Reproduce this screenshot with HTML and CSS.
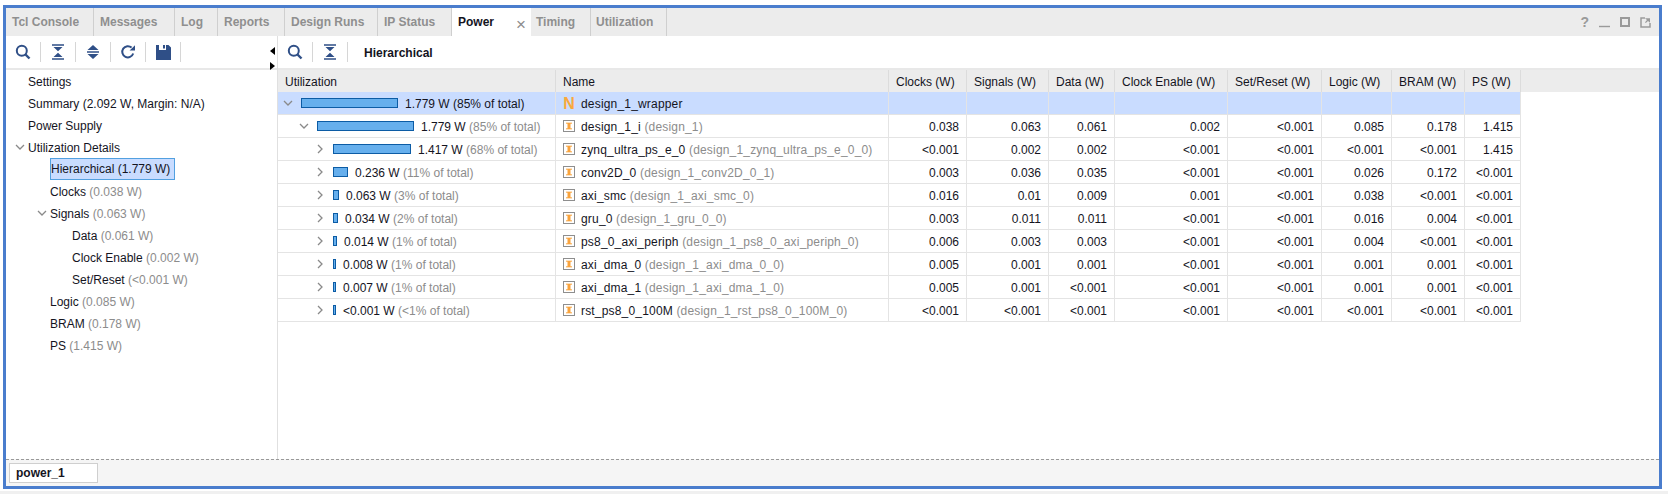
FILE: index.html
```html
<!DOCTYPE html>
<html lang="en">
<head>
<meta charset="utf-8">
<title>Power</title>
<link rel="stylesheet" href="styles.css">
</head>
<body>
<svg class="defs" width="0" height="0" aria-hidden="true">
  <defs>
    <symbol id="i-search" viewBox="0 0 16 16"><circle cx="6.8" cy="6.8" r="5" fill="none" stroke="#2f4f87" stroke-width="2"/><path d="M10.5 10.5l4 4" stroke="#2f4f87" stroke-width="2.4" fill="none"/></symbol>
    <symbol id="i-collapse" viewBox="0 0 14 16"><path d="M1 1h12M1 15h12" stroke="#2f4f87" stroke-width="1.6" fill="none"/><path d="M2.500 3h9L7 7.300zM2.500 13h9L7 8.700z" fill="#2f4f87"/></symbol>
    <symbol id="i-sort" viewBox="0 0 14 16"><path d="M7 1l5.500 5h-11zM7 15l-5.500-5h11z" fill="#2f4f87"/><path d="M1 8h12" stroke="#2f4f87" stroke-width="1.500"/></symbol>
    <symbol id="i-refresh" viewBox="0 0 16 16"><path d="M13.200 9.500A5.600 5.600 0 1 1 11.600 3.600" fill="none" stroke="#2f4f87" stroke-width="2"/><path d="M9.600 6.600h5.400V1.200z" fill="#2f4f87"/></symbol>
    <symbol id="i-save" viewBox="0 0 15 15"><path d="M0 0h3v5h7V0h2.500L15 2.500V15H0z" fill="#2f4f87"/><path d="M7 0h2v3.500H7z" fill="#2f4f87"/></symbol>
    <symbol id="i-down" viewBox="0 0 10 10"><path d="M1 3l4 4 4-4" fill="none" stroke="#8a8a8a" stroke-width="1.300"/></symbol>
    <symbol id="i-right" viewBox="0 0 10 10"><path d="M3 1l4 4-4 4" fill="none" stroke="#8a8a8a" stroke-width="1.300"/></symbol>
    <symbol id="i-inst" viewBox="0 0 12 12"><rect x=".5" y=".5" width="11" height="11" fill="#fff" stroke="#8e8e8e"/><path d="M3 2.500h6v1.500H3zM3 8h6v1.500H3z" fill="#fbc27c"/><path d="M4.500 3h3v6h-3z" fill="#f9a33c"/></symbol>
  </defs>
</svg>

<main class="frame">
  <nav class="tabbar">
    <span class="tab tab-tcl">Tcl Console</span>
    <span class="tab tab-msg">Messages</span>
    <span class="tab tab-log">Log</span>
    <span class="tab tab-rep">Reports</span>
    <span class="tab tab-runs">Design Runs</span>
    <span class="tab tab-ip">IP Status</span>
    <span class="tab tab-active">Power<span class="tab-close">×</span></span>
    <span class="tab tab-tim">Timing</span>
    <span class="tab tab-util">Utilization</span>
    <div class="win-icons">
      <span class="win-help">?</span>
      <svg width="11" height="12" viewBox="0 0 11 12"><path d="M0 10.500h11" stroke="#9a9a9a" stroke-width="1.400"/></svg>
      <svg width="10" height="10" viewBox="0 0 10 10"><rect x="1" y="1" width="8" height="8" fill="none" stroke="#9a9a9a" stroke-width="2"/></svg>
      <svg width="11" height="11" viewBox="0 0 11 11"><path d="M5 1H1v9h9V6" fill="none" stroke="#9a9a9a" stroke-width="1.500"/><path d="M5 1.200h5v4.600L8 4 5.800 6 5 5.200 7 3z" fill="#9a9a9a"/></svg>
    </div>
  </nav>

  <div class="body">
    <aside class="side">
      <div class="toolbar side-bar">
        <button class="tool"><svg class="ico" width="16" height="16"><use href="#i-search"/></svg></button>
        <button class="tool"><svg class="ico" width="14" height="16"><use href="#i-collapse"/></svg></button>
        <button class="tool"><svg class="ico" width="14" height="16"><use href="#i-sort"/></svg></button>
        <button class="tool"><svg class="ico" width="16" height="16"><use href="#i-refresh"/></svg></button>
        <button class="tool"><svg class="ico" width="15" height="15"><use href="#i-save"/></svg></button>
      </div>
      <span class="split split-left"></span>
      <span class="split split-right"></span>
      <ul class="tree">
        <li class="node l1">Settings</li>
        <li class="node l1">Summary (2.092 W, Margin: N/A)</li>
        <li class="node l1">Power Supply</li>
        <li class="node l1"><svg class="twist" width="10" height="10"><use href="#i-down"/></svg>Utilization Details</li>
        <li class="node l2"><span class="picked">Hierarchical (1.779 W)</span></li>
        <li class="node l2">Clocks <em>(0.038 W)</em></li>
        <li class="node l2"><svg class="twist" width="10" height="10"><use href="#i-down"/></svg>Signals <em>(0.063 W)</em></li>
        <li class="node l3">Data <em>(0.061 W)</em></li>
        <li class="node l3">Clock Enable <em>(0.002 W)</em></li>
        <li class="node l3">Set/Reset <em>(&lt;0.001 W)</em></li>
        <li class="node l2">Logic <em>(0.085 W)</em></li>
        <li class="node l2">BRAM <em>(0.178 W)</em></li>
        <li class="node l2">PS <em>(1.415 W)</em></li>
      </ul>
    </aside>

    <section class="content">
      <div class="toolbar content-bar">
        <button class="tool"><svg class="ico" width="16" height="16"><use href="#i-search"/></svg></button>
        <button class="tool"><svg class="ico" width="14" height="16"><use href="#i-collapse"/></svg></button>
        <strong class="view-title">Hierarchical</strong>
      </div>
      <div class="head">
        <div class="row row-head">
          <div class="cell">Utilization</div><div class="cell">Name</div><div class="cell">Clocks (W)</div><div class="cell">Signals (W)</div><div class="cell">Data (W)</div><div class="cell">Clock Enable (W)</div><div class="cell">Set/Reset (W)</div><div class="cell">Logic (W)</div><div class="cell">BRAM (W)</div><div class="cell">PS (W)</div>
        </div>
      </div>
      <div class="rows">
        <div class="row row-sel">
          <div class="cell util d0"><svg class="chev" width="10" height="10"><use href="#i-down"/></svg><span class="bar" style="width:97px"></span>1.779 W (85% of total)</div>
          <div class="cell name"><span class="n-icon">N</span>design_1_wrapper</div>
          <div class="cell"></div><div class="cell"></div><div class="cell"></div><div class="cell"></div><div class="cell"></div><div class="cell"></div><div class="cell"></div><div class="cell"></div>
        </div>
        <div class="row">
          <div class="cell util d1"><svg class="chev" width="10" height="10"><use href="#i-down"/></svg><span class="bar" style="width:97px"></span>1.779 W&nbsp;<em>(85% of total)</em></div>
          <div class="cell name"><svg class="inst" width="12" height="12"><use href="#i-inst"/></svg>design_1_i&nbsp;<em>(design_1)</em></div>
          <div class="cell num">0.038</div><div class="cell num">0.063</div><div class="cell num">0.061</div><div class="cell num">0.002</div><div class="cell num">&lt;0.001</div><div class="cell num">0.085</div><div class="cell num">0.178</div><div class="cell num">1.415</div>
        </div>
        <div class="row">
          <div class="cell util d2"><svg class="chev" width="10" height="10"><use href="#i-right"/></svg><span class="bar" style="width:78px"></span>1.417 W&nbsp;<em>(68% of total)</em></div>
          <div class="cell name"><svg class="inst" width="12" height="12"><use href="#i-inst"/></svg>zynq_ultra_ps_e_0&nbsp;<em>(design_1_zynq_ultra_ps_e_0_0)</em></div>
          <div class="cell num">&lt;0.001</div><div class="cell num">0.002</div><div class="cell num">0.002</div><div class="cell num">&lt;0.001</div><div class="cell num">&lt;0.001</div><div class="cell num">&lt;0.001</div><div class="cell num">&lt;0.001</div><div class="cell num">1.415</div>
        </div>
        <div class="row">
          <div class="cell util d2"><svg class="chev" width="10" height="10"><use href="#i-right"/></svg><span class="bar" style="width:15px"></span>0.236 W&nbsp;<em>(11% of total)</em></div>
          <div class="cell name"><svg class="inst" width="12" height="12"><use href="#i-inst"/></svg>conv2D_0&nbsp;<em>(design_1_conv2D_0_1)</em></div>
          <div class="cell num">0.003</div><div class="cell num">0.036</div><div class="cell num">0.035</div><div class="cell num">&lt;0.001</div><div class="cell num">&lt;0.001</div><div class="cell num">0.026</div><div class="cell num">0.172</div><div class="cell num">&lt;0.001</div>
        </div>
        <div class="row">
          <div class="cell util d2"><svg class="chev" width="10" height="10"><use href="#i-right"/></svg><span class="bar" style="width:6px"></span>0.063 W&nbsp;<em>(3% of total)</em></div>
          <div class="cell name"><svg class="inst" width="12" height="12"><use href="#i-inst"/></svg>axi_smc&nbsp;<em>(design_1_axi_smc_0)</em></div>
          <div class="cell num">0.016</div><div class="cell num">0.01</div><div class="cell num">0.009</div><div class="cell num">0.001</div><div class="cell num">&lt;0.001</div><div class="cell num">0.038</div><div class="cell num">&lt;0.001</div><div class="cell num">&lt;0.001</div>
        </div>
        <div class="row">
          <div class="cell util d2"><svg class="chev" width="10" height="10"><use href="#i-right"/></svg><span class="bar" style="width:5px"></span>0.034 W&nbsp;<em>(2% of total)</em></div>
          <div class="cell name"><svg class="inst" width="12" height="12"><use href="#i-inst"/></svg>gru_0&nbsp;<em>(design_1_gru_0_0)</em></div>
          <div class="cell num">0.003</div><div class="cell num">0.011</div><div class="cell num">0.011</div><div class="cell num">&lt;0.001</div><div class="cell num">&lt;0.001</div><div class="cell num">0.016</div><div class="cell num">0.004</div><div class="cell num">&lt;0.001</div>
        </div>
        <div class="row">
          <div class="cell util d2"><svg class="chev" width="10" height="10"><use href="#i-right"/></svg><span class="bar" style="width:4px"></span>0.014 W&nbsp;<em>(1% of total)</em></div>
          <div class="cell name"><svg class="inst" width="12" height="12"><use href="#i-inst"/></svg>ps8_0_axi_periph&nbsp;<em>(design_1_ps8_0_axi_periph_0)</em></div>
          <div class="cell num">0.006</div><div class="cell num">0.003</div><div class="cell num">0.003</div><div class="cell num">&lt;0.001</div><div class="cell num">&lt;0.001</div><div class="cell num">0.004</div><div class="cell num">&lt;0.001</div><div class="cell num">&lt;0.001</div>
        </div>
        <div class="row">
          <div class="cell util d2"><svg class="chev" width="10" height="10"><use href="#i-right"/></svg><span class="bar" style="width:3px"></span>0.008 W&nbsp;<em>(1% of total)</em></div>
          <div class="cell name"><svg class="inst" width="12" height="12"><use href="#i-inst"/></svg>axi_dma_0&nbsp;<em>(design_1_axi_dma_0_0)</em></div>
          <div class="cell num">0.005</div><div class="cell num">0.001</div><div class="cell num">0.001</div><div class="cell num">&lt;0.001</div><div class="cell num">&lt;0.001</div><div class="cell num">0.001</div><div class="cell num">0.001</div><div class="cell num">&lt;0.001</div>
        </div>
        <div class="row">
          <div class="cell util d2"><svg class="chev" width="10" height="10"><use href="#i-right"/></svg><span class="bar" style="width:3px"></span>0.007 W&nbsp;<em>(1% of total)</em></div>
          <div class="cell name"><svg class="inst" width="12" height="12"><use href="#i-inst"/></svg>axi_dma_1&nbsp;<em>(design_1_axi_dma_1_0)</em></div>
          <div class="cell num">0.005</div><div class="cell num">0.001</div><div class="cell num">&lt;0.001</div><div class="cell num">&lt;0.001</div><div class="cell num">&lt;0.001</div><div class="cell num">0.001</div><div class="cell num">0.001</div><div class="cell num">&lt;0.001</div>
        </div>
        <div class="row">
          <div class="cell util d2"><svg class="chev" width="10" height="10"><use href="#i-right"/></svg><span class="bar" style="width:3px"></span>&lt;0.001 W&nbsp;<em>(&lt;1% of total)</em></div>
          <div class="cell name"><svg class="inst" width="12" height="12"><use href="#i-inst"/></svg>rst_ps8_0_100M&nbsp;<em>(design_1_rst_ps8_0_100M_0)</em></div>
          <div class="cell num">&lt;0.001</div><div class="cell num">&lt;0.001</div><div class="cell num">&lt;0.001</div><div class="cell num">&lt;0.001</div><div class="cell num">&lt;0.001</div><div class="cell num">&lt;0.001</div><div class="cell num">&lt;0.001</div><div class="cell num">&lt;0.001</div>
        </div>
      </div>
    </section>
  </div>

  <footer class="runs">
    <span class="run-tab">power_1</span>
  </footer>
</main>
</body>
</html>
```

FILE: styles.css
```css
* { box-sizing: border-box; }
html, body { margin: 0; height: 494px; overflow: hidden; }
body {
  background: #fff;
  padding: 5px 6px 0 3px;
  font-family: "Liberation Sans", Arial, sans-serif;
  font-size: 12px;
  color: #14141e;
  position: relative;
}
body::after {
  content: "";
  position: absolute;
  left: 0; right: 0; bottom: 0;
  height: 3px;
  background: #f0f0f0;
}
.defs { position: absolute; }
em { font-style: normal; color: #8c8c8c; }
svg { display: block; flex: none; }

.frame {
  width: 1659px;
  height: 484px;
  border: 3px solid #4a7dcd;
  display: flex;
  flex-direction: column;
  background: #fff;
}

/* tab bar */
.tabbar {
  height: 28px;
  flex: none;
  display: flex;
  background: #ececec;
}
.tab {
  display: flex;
  align-items: center;
  padding-left: 6px;
  font-weight: bold;
  color: #8f8f8f;
  border-right: 1px solid #cfcfcf;
  padding-bottom: 1px;
}
.tab-tcl { width: 88px; }
.tab-msg { width: 81px; }
.tab-log { width: 43px; }
.tab-rep { width: 67px; }
.tab-runs { width: 93px; }
.tab-ip { width: 74px; }
.tab-active {
  width: 79px;
  background: #fff;
  color: #14141e;
  border-right: 0;
  position: relative;
}
.tab-close {
  position: absolute;
  right: 5px;
  top: 7px;
  font-weight: normal;
  font-size: 17px;
  line-height: 20px;
  color: #8c8c8c;
}
.tab-tim { width: 60px; padding-left: 5px; }
.tab-util { width: 76px; padding-left: 5px; }
.win-icons {
  margin-left: auto;
  display: flex;
  align-items: center;
  gap: 10px;
  padding-right: 8px;
}
.win-help { font-weight: bold; font-size: 14px; color: #9a9a9a; }

/* panels */
.body { flex: 1; display: flex; min-height: 0; }
.side {
  width: 272px;
  flex: none;
  border-right: 1px solid #e0e0e0;
  position: relative;
}
.content { flex: 1; min-width: 0; }
.toolbar {
  height: 34px;
  display: flex;
  align-items: center;
  border-bottom: 2px solid #e8e8e8;
  padding-bottom: 2px;
}
.tool {
  width: 35px;
  height: 20px;
  border: 0;
  padding: 0;
  background: none;
  border-right: 1px solid #d6d6d6;
  display: flex;
  align-items: center;
  justify-content: center;
  margin-top: 2px;
}
.view-title { margin-left: 16px; margin-top: 3px; }
.split { position: absolute; width: 0; height: 0; border-style: solid; left: 264px; }
.split-left { top: 11px; border-width: 4px 5px 4px 0; border-color: transparent #000 transparent transparent; }
.split-right { top: 26px; border-width: 4px 0 4px 5px; border-color: transparent transparent transparent #000; }

/* tree */
.tree { list-style: none; margin: 0; padding: 0; }
.node {
  height: 22px;
  display: flex;
  align-items: center;
  white-space: pre;
  position: relative;
  padding-top: 1px;
}
.l1 { padding-left: 22px; }
.l2 { padding-left: 44px; }
.l3 { padding-left: 66px; }
.twist { position: absolute; margin-left: -13px; margin-top: -1px; }
.picked {
  height: 22px;
  display: flex;
  align-items: center;
  padding: 0 4px 0 0;
  background: #c9dcff;
  border: 1px solid #52a0e0;
  margin-top: -1px;
}

/* table */
.head { background: #ececec; height: 22px; }
.row {
  display: grid;
  grid-template-columns: 278px 333px 78px 82px 66px 113px 94px 70px 73px 56px;
  width: 1243px;
  height: 23px;
}
.row-head { height: 22px; }
.row-head .cell { border-bottom: 0; border-right-color: #dcdcdc; padding: 1px 0 0 7px; }
.row-sel .cell { background: #c9dcff; }
.cell {
  display: flex;
  align-items: center;
  white-space: pre;
  overflow: hidden;
  border-right: 1px solid #e4e4e4;
  border-bottom: 1px solid #e4e4e4;
  padding: 1px 6px 0;
}
.num { justify-content: flex-end; padding-right: 7px; }
.util { padding-right: 0; }
.d0 { padding-left: 5px; }
.d1 { padding-left: 21px; }
.d2 { padding-left: 37px; }
.chev { margin-right: 8px; margin-top: -1px; }
.bar {
  height: 10px;
  margin-right: 7px;
  margin-top: -1px;
  background: #66afed;
  border: 1px solid #0c5ca5;
  flex: none;
}
.name { padding-left: 7px; letter-spacing: .18px; }
.inst { margin-right: 6px; margin-top: -1px; }
.n-icon {
  width: 12px;
  margin-right: 6px;
  color: #f9a83c;
  font-weight: bold;
  font-size: 16px;
  text-align: center;
  letter-spacing: 0;
}

/* bottom run strip */
.runs {
  height: 27px;
  flex: none;
  background: #f5f5f5;
  border-top: 1px dashed #999;
  padding: 3px 0 0 3px;
}
.run-tab {
  display: flex;
  align-items: center;
  width: 89px;
  height: 20px;
  background: #fff;
  border: 1px solid #cfcfcf;
  padding-left: 6px;
  font-weight: bold;
}
```
